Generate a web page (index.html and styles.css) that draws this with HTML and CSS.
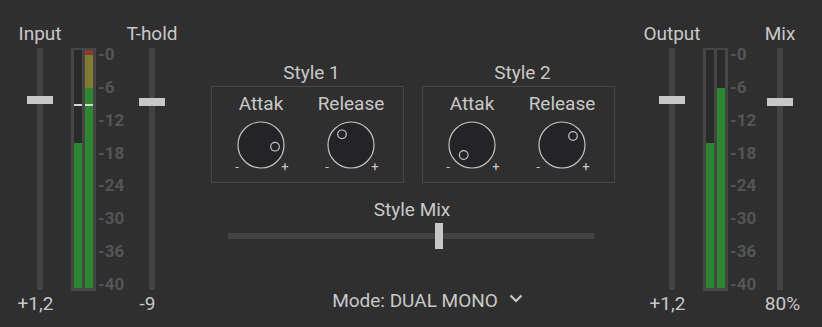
FILE: index.html
```html
<!DOCTYPE html>
<html lang="en">

<head>
    <meta charset="UTF-8">
    <title>Compressor</title>
    <link rel="stylesheet" href="styles.css">
</head>

<body>
    <div class="plugin">
        <div class="fader first">
            <div class="label">Input</div>
            <div class="track"><div class="handle" style="top: 48px"></div></div>
            <div class="value">+1,2</div>
        </div>

        <div class="meter">
            <div class="meter-frame">
                <div class="channel">
                    <div class="level" style="height: 145px"></div>
                    <div class="peak" style="top: 54px"></div>
                </div>
                <div class="channel">
                    <div class="level" style="height: 238px"></div>
                    <div class="peak" style="top: 54px"></div>
                </div>
            </div>
            <div class="scale">
                <span>-0</span><span>-6</span><span>-12</span><span>-18</span>
                <span>-24</span><span>-30</span><span>-36</span><span>-40</span>
            </div>
        </div>

        <div class="fader">
            <div class="label">T-hold</div>
            <div class="track"><div class="handle" style="top: 50px"></div></div>
            <div class="value">-9</div>
        </div>

        <div class="center">
            <div class="styles">
                <div class="style">
                    <div class="label">Style 1</div>
                    <div class="box">
                        <div class="knob">
                            <div class="label">Attak</div>
                            <svg width="64" height="58" viewBox="0 0 64 58">
                                <circle cx="32" cy="25" r="23" class="dial"/>
                                <circle cx="46" cy="26.7" r="4.3" class="dot"/>
                                <text x="8" y="51" class="sign">-</text>
                                <text x="56" y="51" class="sign">+</text>
                            </svg>
                        </div>
                        <div class="knob">
                            <div class="label">Release</div>
                            <svg width="64" height="58" viewBox="0 0 64 58">
                                <circle cx="32" cy="25" r="23" class="dial"/>
                                <circle cx="23" cy="14.3" r="4.3" class="dot"/>
                                <text x="8" y="51" class="sign">-</text>
                                <text x="56" y="51" class="sign">+</text>
                            </svg>
                        </div>
                    </div>
                </div>
                <div class="style">
                    <div class="label">Style 2</div>
                    <div class="box">
                        <div class="knob">
                            <div class="label">Attak</div>
                            <svg width="64" height="58" viewBox="0 0 64 58">
                                <circle cx="32" cy="25" r="23" class="dial"/>
                                <circle cx="23.7" cy="35" r="4.3" class="dot"/>
                                <text x="8" y="51" class="sign">-</text>
                                <text x="56" y="51" class="sign">+</text>
                            </svg>
                        </div>
                        <div class="knob">
                            <div class="label">Release</div>
                            <svg width="64" height="58" viewBox="0 0 64 58">
                                <circle cx="32" cy="25" r="23" class="dial"/>
                                <circle cx="43" cy="16" r="4.3" class="dot"/>
                                <text x="8" y="51" class="sign">-</text>
                                <text x="56" y="51" class="sign">+</text>
                            </svg>
                        </div>
                    </div>
                </div>
            </div>

            <div class="label mix-label">Style Mix</div>
            <div class="mix-slider">
                <div class="mix-track"></div>
                <div class="mix-handle" style="left: 207px"></div>
            </div>

            <div class="mode">
                <span>Mode: DUAL MONO</span>
                <svg width="14" height="9" viewBox="0 0 14 9">
                    <path d="M1.5 1.5 L7 7 L12.5 1.5" fill="none" stroke="#c8c8c8" stroke-width="2.2"/>
                </svg>
            </div>
        </div>

        <div class="fader">
            <div class="label">Output</div>
            <div class="track"><div class="handle" style="top: 48px"></div></div>
            <div class="value">+1,2</div>
        </div>

        <div class="meter out">
            <div class="meter-frame">
                <div class="channel">
                    <div class="level" style="height: 145px"></div>
                </div>
                <div class="channel">
                    <div class="level" style="height: 200px"></div>
                </div>
            </div>
            <div class="scale">
                <span>-0</span><span>-6</span><span>-12</span><span>-18</span>
                <span>-24</span><span>-30</span><span>-36</span><span>-40</span>
            </div>
        </div>

        <div class="fader">
            <div class="label">Mix</div>
            <div class="track"><div class="handle" style="top: 50px"></div></div>
            <div class="value pct">80%</div>
        </div>
    </div>
</body>

</html>
```

FILE: styles.css
```css
* {
    box-sizing: border-box;
    padding: 0;
    margin: 0;
}

body {
    width: 822px;
    height: 327px;
    overflow: hidden;
    background-color: #2f2f2f;
    color: #c8c8c8;
    font-family: Roboto, "Liberation Sans", sans-serif;
    font-size: 19px;
}

.plugin {
    display: flex;
    align-items: flex-start;
    height: 327px;
    padding-top: 23px;
}

.label {
    height: 22px;
    line-height: 22px;
    text-align: center;
    white-space: nowrap;
}

/* vertical faders */
.fader {
    width: 50px;
    display: flex;
    flex-direction: column;
    align-items: center;
}

.fader.first {
    margin-left: 15px;
}

.fader .label {
    margin-bottom: 3px;
}

.track {
    position: relative;
    width: 6px;
    height: 242px;
    background-color: #434343;
}

.handle {
    position: absolute;
    left: -10px;
    width: 26px;
    height: 8px;
    background-color: #c8c8c8;
}

.value {
    margin-top: 3px;
    padding-right: 9px;
    line-height: 22px;
    white-space: nowrap;
}

.value.pct {
    padding: 0 0 0 5px;
}

/* level meters */
.meter {
    display: flex;
    width: 56px;
    margin-top: 25px;
    margin-left: 6px;
}

.meter.out {
    width: 52px;
}

.meter-frame {
    display: flex;
    gap: 3px;
    height: 243px;
    padding: 2px 3px 3px;
    background-color: #464646;
}

.channel {
    position: relative;
    display: flex;
    align-items: flex-end;
    width: 8px;
    height: 238px;
    background-color: #2a2a2a;
}

.level {
    width: 100%;
    background-image: linear-gradient(to top, #2b882e 200px, #7e7d2f 200px, #7e7d2f 233px, #8a3b2b 233px);
    background-size: 100% 238px;
    background-position: bottom;
}

.peak {
    position: absolute;
    left: 0;
    right: 0;
    height: 2px;
    background-color: #d4d4d4;
}

.scale {
    display: flex;
    flex-direction: column;
    justify-content: space-between;
    height: 247px;
    margin: -2px 0 0 2px;
    color: #555555;
    font-size: 17px;
    font-weight: 700;
    line-height: 17px;
}

/* middle section */
.center {
    width: 470px;
    display: flex;
    flex-direction: column;
    align-items: center;
    margin-top: 39px;
}

.styles {
    display: flex;
    gap: 18px;
    margin-left: 2px;
}

.style {
    display: flex;
    flex-direction: column;
    align-items: center;
}

.style > .label {
    margin-bottom: 2px;
    padding-left: 8px;
}

.box {
    display: flex;
    width: 193px;
    height: 97px;
    padding: 6px 0 0 4px;
    border: 1px solid #474747;
}

.knob {
    width: 90px;
    display: flex;
    flex-direction: column;
    align-items: center;
}

.knob svg {
    display: block;
    flex-shrink: 0;
    margin-top: 5px;
}

.dial {
    fill: #242326;
    stroke: #c4c4c4;
    stroke-width: 1.2;
}

.dot {
    fill: none;
    stroke: #c4c4c4;
    stroke-width: 1.2;
}

.sign {
    fill: #c8c8c8;
    font-family: Roboto, "Liberation Sans", sans-serif;
    font-size: 13px;
    text-anchor: middle;
}

.mix-label {
    margin-top: 16px;
}

.mix-slider {
    position: relative;
    display: flex;
    align-items: center;
    width: 366px;
    height: 26px;
    margin: 2px 2px 0 0;
}

.mix-track {
    width: 100%;
    height: 6px;
    background-color: #434343;
}

.mix-handle {
    position: absolute;
    top: 0;
    width: 8px;
    height: 26px;
    background-color: #c8c8c8;
}

.mode {
    display: flex;
    align-items: center;
    gap: 11px;
    margin-top: 41px;
    padding-left: 31px;
    line-height: 22px;
    white-space: nowrap;
}

.mode svg {
    display: block;
    margin-bottom: 5px;
}
```
